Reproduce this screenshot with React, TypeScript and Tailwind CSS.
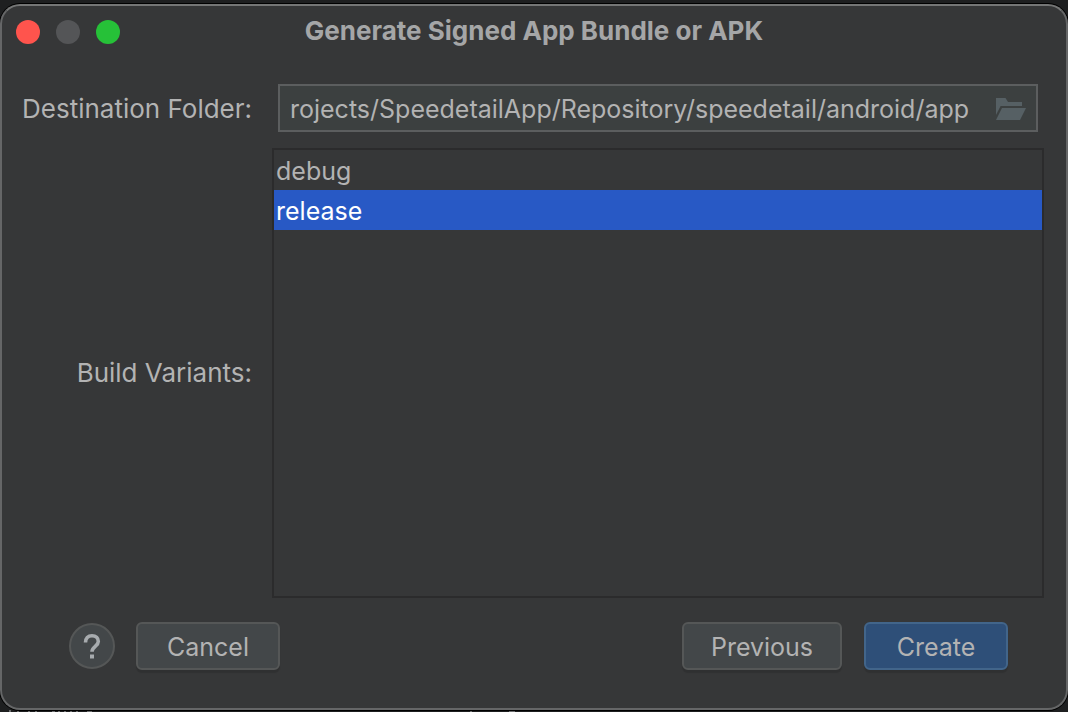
import { useState } from "react";

const variants = ["debug", "release"];

const buttonBase =
  "h-12 rounded-md border-2 pt-0.5 text-[25px] leading-none shadow-[0_3px_1px_rgba(0,0,0,0.12)]";

function FolderIcon() {
  return (
    <svg width="30" height="22" viewBox="0 0 30 22" fill="#566064" aria-hidden="true">
      <path d="M0 0h9.500l2.500 4h14v4H4.600L0 17z" />
      <path d="M6 10h24l-6 12H0z" />
    </svg>
  );
}

function BackgroundEdge() {
  return (
    <svg width="560" height="2" viewBox="0 0 560 2" className="block h-0.5 shrink-0" aria-hidden="true">
      <path
        d="M9 0h2v2H9zM17 1h2v1h-2zM28 1h2v1h-2zM35 1h2v1h-2zM52 1h3v1h-3zM58 1h2v1h-2zM64 1h2v1h-2zM70 1h2v1h-2zM76 1h2v1h-2zM87 1h5v1h-5zM470 1h2v1h-2zM509 1h6v1h-6z"
        fill="#6b6c6d"
      />
    </svg>
  );
}

export default function App() {
  const [folder, setFolder] = useState("rojects/SpeedetailApp/Repository/speedetail/android/app");
  const [selected, setSelected] = useState("release");

  return (
    <div className="flex min-h-screen flex-col bg-[#1e1f20] pt-1 font-['Inter',sans-serif] text-[25px] leading-[30px] text-[#b3b3b3]">
      <main className="flex grow flex-col rounded-[20px] border-2 border-[#656667] border-t-[#757676] bg-[#363738] shadow-[0_0_0_1px_#000]">
        <header className="grid h-[52px] grid-cols-[1fr_auto_1fr] items-center px-3.5">
          <div className="flex gap-4">
            <button aria-label="Close" className="size-6 rounded-full bg-[#ff544d]" />
            <button aria-label="Minimize" disabled className="size-6 rounded-full bg-[#545557]" />
            <button aria-label="Zoom" className="size-6 rounded-full bg-[#26c138]" />
          </div>
          <h1 className="pb-0.5 text-[26px] font-bold text-[#a5a6a7]">Generate Signed App Bundle or APK</h1>
        </header>

        <div className="grid grow grid-cols-[230px_1fr] grid-rows-[auto_1fr] items-center gap-x-5 gap-y-4 pt-[26px] pr-[22px] pl-5">
          <label htmlFor="folder" className="pt-0.5 text-right text-[26px] whitespace-nowrap">
            Destination Folder:
          </label>
          <div className="mx-1.5 flex h-12 items-center border-2 border-[#5c5e5f] bg-[#3c4040] px-2.5">
            <input
              id="folder"
              value={folder}
              onChange={(e) => setFolder(e.target.value)}
              className="min-w-0 grow bg-transparent pt-0.5 outline-none"
            />
            <button aria-label="Browse" className="shrink-0 pt-0.5 pl-1">
              <FolderIcon />
            </button>
          </div>

          <span id="variants-label" className="text-right text-[26px] whitespace-nowrap">
            Build Variants:
          </span>
          <ul
            role="listbox"
            aria-labelledby="variants-label"
            className="h-full self-stretch border-2 border-[#2b2b2c]"
          >
            {variants.map((name) => (
              <li
                key={name}
                role="option"
                tabIndex={0}
                aria-selected={name === selected}
                onClick={() => setSelected(name)}
                className={
                  name === selected
                    ? "flex h-10 items-center bg-[#2859c5] px-0.5 pt-0.5 text-white"
                    : "flex h-10 items-center px-0.5 pt-0.5"
                }
              >
                {name}
              </li>
            ))}
          </ul>
        </div>

        <footer className="flex items-center pt-6 pr-[58px] pb-[38px] pl-[67px]">
          <button
            aria-label="Help"
            className="flex size-[46px] items-center justify-center rounded-full border-2 border-[#555757] bg-[#434749] text-[#a7abae]"
          >
            <svg width="18" height="26" viewBox="0 0 18 26" fill="none" aria-hidden="true">
              <path
                d="M2.500 9.500C2.500 5.300 5 2.800 9 2.800s6.300 2.400 6.300 5.700c0 4.600-6.300 5.200-6.300 10.200"
                stroke="currentColor"
                strokeWidth="3.600"
              />
              <path d="M7 21.500h4v4H7z" fill="currentColor" />
            </svg>
          </button>
          <button className={`${buttonBase} ml-[21px] w-36 border-[#555757] bg-[#434749]`}>Cancel</button>
          <button className={`${buttonBase} ml-auto w-40 border-[#555757] bg-[#434749]`}>Previous</button>
          <button className={`${buttonBase} ml-[22px] w-36 border-[#42658a] bg-[#2e4f78]`}>Create</button>
        </footer>
      </main>
      <BackgroundEdge />
    </div>
  );
}
